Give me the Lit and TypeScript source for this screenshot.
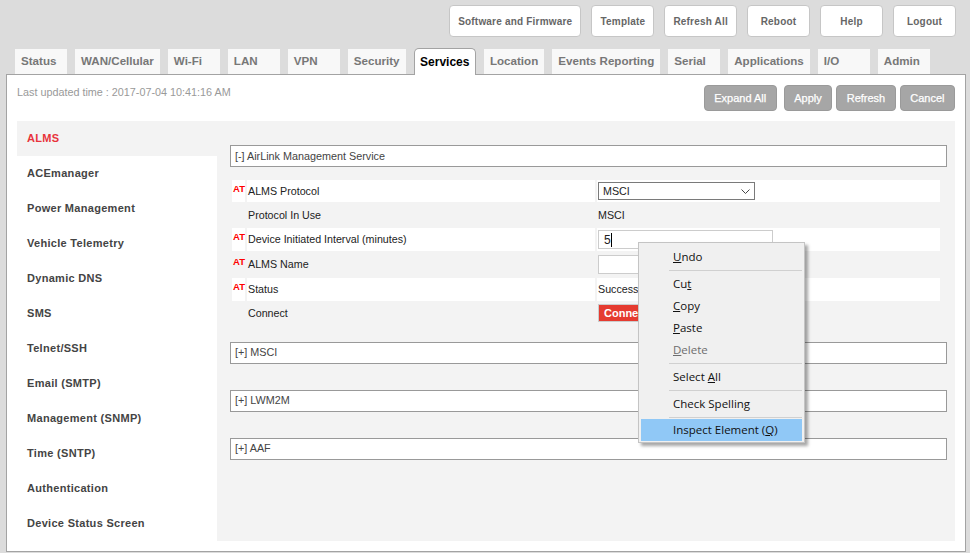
import { LitElement, css, html } from "lit";
import { customElement } from "lit/decorators.js";

const TOP_BUTTONS = ["Software and Firmware", "Template", "Refresh All", "Reboot", "Help", "Logout"];
const TABS = ["Status", "WAN/Cellular", "Wi-Fi", "LAN", "VPN", "Security", "Services", "Location", "Events Reporting", "Serial", "Applications", "I/O", "Admin"];
const ACTIONS = ["Expand All", "Apply", "Refresh", "Cancel"];
const SIDE = ["ALMS", "ACEmanager", "Power Management", "Vehicle Telemetry", "Dynamic DNS", "SMS", "Telnet/SSH", "Email (SMTP)", "Management (SNMP)", "Time (SNTP)", "Authentication", "Device Status Screen"];

@customElement("app-root")
export class AppRoot extends LitElement {
  static styles = css`
    :host {
      display: block;
      position: relative;
      width: 970px;
      height: 553px;
      overflow: hidden;
      background: #dcdcdc;
      font-family: "Liberation Sans", Arial, sans-serif;
      font-size: 11px;
      color: #333;
    }
    .top {
      display: flex;
      justify-content: flex-end;
      gap: 10px;
      padding: 5px 14px 0 0;
      height: 43px;
      box-sizing: border-box;
    }
    .top-btn {
      height: 32px;
      min-width: 63px;
      padding: 0 8px;
      box-sizing: border-box;
      display: flex;
      align-items: center;
      justify-content: center;
      background: #fff;
      border: 1px solid #c6c6c6;
      border-radius: 4px;
      color: #666;
      font-weight: bold;
      font-size: 10px;
      letter-spacing: 0.2px;
    }
    .tabs {
      display: flex;
      align-items: flex-end;
      gap: 8px;
      padding-left: 15px;
      height: 31px;
      box-sizing: border-box;
      position: relative;
    }
    .tab {
      height: 25px;
      min-width: 52px;
      padding: 0 6px 2px;
      box-sizing: border-box;
      display: flex;
      align-items: center;
      background: #f8f8f8;
      color: #777;
      font-weight: bold;
      font-size: 11.6px;
    }
    .tab.active {
      height: 27px;
      margin-bottom: -1px;
      padding: 0 5.5px 1px;
      background: #fff;
      color: #000;
      border: 1px solid #a3a3a3;
      border-bottom: 0;
      border-radius: 5px 5px 0 0;
      font-size: 12px;
    }
    .panel {
      margin-left: 6px;
      width: 960px;
      height: 478px;
      box-sizing: border-box;
      padding: 10px;
      background: #fff;
      border: 1px solid #a3a3a3;
    }
    .bar {
      display: flex;
      justify-content: space-between;
      height: 25px;
      margin-bottom: 11px;
    }
    .updated {
      color: #999;
      font-size: 10.8px;
      padding-top: 1px;
    }
    .actions {
      display: flex;
      gap: 4px;
    }
    .act {
      height: 26px;
      padding: 0 9.5px;
      box-sizing: border-box;
      display: flex;
      align-items: center;
      justify-content: center;
      background: #a6a6a6;
      border: 1px solid #9a9a9a;
      border-radius: 4px;
      color: #fff;
      font-size: 11px;
      -webkit-text-stroke: 0.25px #fff;
    }
    .act.wide { margin-right: 3px; }
    .content {
      display: flex;
      height: 420px;
      background: #f3f3f3;
    }
    .side {
      width: 200px;
      flex: none;
      background: #fff;
    }
    .side-item {
      height: 35px;
      padding: 0 0 2px 10px;
      box-sizing: border-box;
      display: flex;
      align-items: center;
      font-weight: bold;
      font-size: 11px;
      letter-spacing: 0.3px;
      color: #444;
    }
    .side-item.active {
      background: #f3f3f3;
      color: #e8343c;
    }
    .main {
      flex: 1;
      padding: 24px 8px 0 13px;
    }
    .section {
      height: 22px;
      box-sizing: border-box;
      border: 1px solid #999;
      background: #fff;
      display: flex;
      align-items: center;
      padding: 0 0 2px 4px;
      font-size: 10.8px;
      color: #444;
      margin-bottom: 26px;
    }
    .section.open {
      margin-bottom: 13px;
      padding-bottom: 0;
    }
    .grid {
      display: grid;
      grid-template-columns: 13px 348px 343px;
      grid-template-rows: 22px 26px 23px 27px 23px 24px;
      column-gap: 2px;
      margin: 0 0 17px 2px;
    }
    .cell {
      display: flex;
      align-items: center;
      font-size: 10.7px;
      color: #222;
      box-sizing: border-box;
    }
    .cell.shaded { background: #fff; }
    .cell.label { padding-left: 1px; }
    .cell.value { padding-left: 1px; }
    .cell.up { padding-bottom: 1px; }
    .cell.at {
      color: #f00;
      font-weight: bold;
      font-size: 9.5px;
      align-items: flex-start;
      padding: 3px 0 0 1px;
    }
    .cell.at.low { padding-top: 5px; }
    .select {
      width: 157px;
      height: 18px;
      box-sizing: border-box;
      border: 1px solid #7a7a7a;
      background: #fff;
      display: flex;
      align-items: center;
      justify-content: space-between;
      padding: 0 4px;
    }
    .input {
      width: 175px;
      height: 19px;
      box-sizing: border-box;
      border: 1px solid #ccc;
      background: #fff;
      display: flex;
      align-items: center;
      padding-left: 5px;
      font-size: 12px;
    }
    .caret {
      width: 1px;
      height: 14px;
      background: #000;
    }
    .connect {
      width: 70px;
      height: 18px;
      box-sizing: border-box;
      border: 1px solid #ccc;
      background: #e53b30;
      color: #fff;
      font-weight: bold;
      font-size: 11px;
      display: flex;
      align-items: center;
      padding-left: 5px;
    }
    .menu {
      position: absolute;
      left: 638px;
      top: 242px;
      width: 167px;
      height: 201px;
      box-sizing: border-box;
      padding: 3px 2px 2px;
      background: #f0f0f0;
      border: 1px solid #c4c4c4;
      box-shadow: 3px 3px 3px rgba(0, 0, 0, 0.35);
      font-family: "Open Sans", "Noto Sans", sans-serif;
      font-size: 11.5px;
      color: #111;
    }
    .mi {
      height: 22px;
      box-sizing: border-box;
      padding: 0 0 1px 32px;
      display: flex;
      align-items: center;
      white-space: pre;
    }
    .mi u { text-underline-offset: 1px; }
    .mi.off { color: #6d6d6d; }
    .mi.hot { background: #90c8f6; }
    .sep {
      height: 1px;
      margin: 2px 0 2px 28px;
      background: #d0d0d0;
    }
    .sep.last { margin-bottom: 1px; }
  `;

  render() {
    return html`
      <div class="top">
        ${TOP_BUTTONS.map((b) => html`<div class="top-btn">${b}</div>`)}
      </div>
      <div class="tabs">
        ${TABS.map((t) => html`<div class="tab ${t === "Services" ? "active" : ""}">${t}</div>`)}
      </div>
      <div class="panel">
        <div class="bar">
          <div class="updated">Last updated time : 2017-07-04 10:41:16 AM</div>
          <div class="actions">
            ${ACTIONS.map((a) => html`<div class="act ${a === "Expand All" ? "wide" : ""}">${a}</div>`)}
          </div>
        </div>
        <div class="content">
          <div class="side">
            ${SIDE.map((s, i) => html`<div class="side-item ${i === 0 ? "active" : ""}">${s}</div>`)}
          </div>
          <div class="main">
            <div class="section open">[-] AirLink Management Service</div>
            <div class="grid">
              <div class="cell at shaded">AT</div>
              <div class="cell label shaded">ALMS Protocol</div>
              <div class="cell value shaded">
                <div class="select">
                  MSCI
                  <svg width="9" height="5" viewBox="0 0 9 5"><path d="M.5.5l4 4 4-4" fill="none" stroke="#444" stroke-width="1"/></svg>
                </div>
              </div>

              <div class="cell"></div>
              <div class="cell label">Protocol In Use</div>
              <div class="cell value">MSCI</div>

              <div class="cell at shaded">AT</div>
              <div class="cell label up shaded">Device Initiated Interval (minutes)</div>
              <div class="cell value shaded"><div class="input">5<span class="caret"></span></div></div>

              <div class="cell at low">AT</div>
              <div class="cell label up">ALMS Name</div>
              <div class="cell value"><div class="input"></div></div>

              <div class="cell at shaded">AT</div>
              <div class="cell label up shaded">Status</div>
              <div class="cell value up shaded">Success</div>

              <div class="cell"></div>
              <div class="cell label">Connect</div>
              <div class="cell value"><div class="connect">Connect</div></div>
            </div>
            <div class="section">[+] MSCI</div>
            <div class="section">[+] LWM2M</div>
            <div class="section">[+] AAF</div>
          </div>
        </div>
      </div>
      <div class="menu">
        <div class="mi"><u>U</u>ndo</div>
        <div class="sep"></div>
        <div class="mi">Cu<u>t</u></div>
        <div class="mi"><u>C</u>opy</div>
        <div class="mi"><u>P</u>aste</div>
        <div class="mi off"><u>D</u>elete</div>
        <div class="sep"></div>
        <div class="mi">Select <u>A</u>ll</div>
        <div class="sep"></div>
        <div class="mi">Check Spellin<u>g</u></div>
        <div class="sep last"></div>
        <div class="mi hot">Inspect Element (<u>Q</u>)</div>
      </div>
    `;
  }
}
